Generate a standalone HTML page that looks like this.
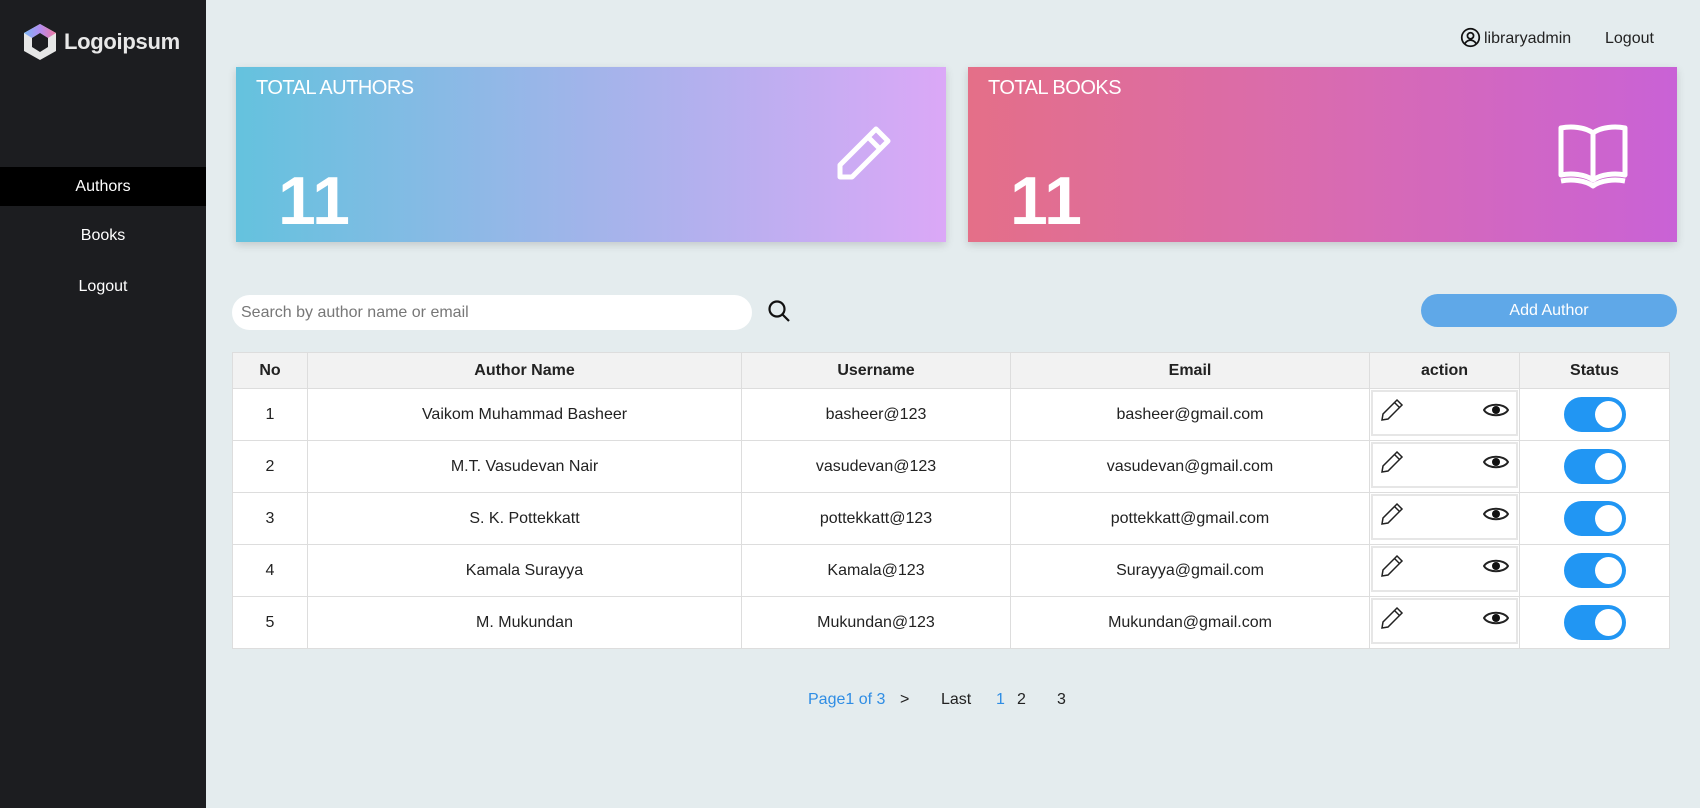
<!DOCTYPE html>
<html><head><style>
*{box-sizing:border-box;margin:0;padding:0}
body{width:1700px;height:808px;background:#e4ecee;font-family:"Liberation Sans",Arial,sans-serif;position:relative;overflow:hidden;color:#222}
.side{position:absolute;left:0;top:0;width:206px;height:808px;background:#1c1d20}
.logo{position:absolute;left:22px;top:22px;display:flex;align-items:center;color:#e8e8e8;font-size:22px;font-weight:bold;letter-spacing:-0.3px}
.nav{position:absolute;left:0;width:206px;text-align:center;color:#fff;font-size:16px;height:39px;line-height:39px}
.card{position:absolute;top:67px;height:175px;box-shadow:0 3px 8px rgba(0,0,0,.15);color:#fff}
.card .t{position:absolute;left:20px;top:10px;font-size:20px;letter-spacing:-0.5px}
.card .n{position:absolute;left:42px;top:95px;font-size:68px;font-weight:bold}
table{position:absolute;left:232px;top:352px;width:1438px;border-collapse:collapse;background:#fff;font-size:16px}
td,th{border:1px solid #ddd;text-align:center;height:52px}
th{background:#f2f2f2;height:36px;font-weight:bold}
.tg{display:inline-block;width:62px;height:35px;border-radius:18px;background:#2196f3;position:relative;vertical-align:middle}
.tg:after{content:"";position:absolute;right:4px;top:4px;width:27px;height:27px;border-radius:50%;background:#fff}
.act{position:relative;padding:0}
.act .bx{position:absolute;left:1px;top:1px;right:1px;bottom:4px;border:2px solid #e6e6e6}
.act svg{position:absolute;top:9px}
</style></head><body>
<div class="side">
 <div class="logo"><svg width="36" height="40" viewBox="0 0 36 40"><defs><linearGradient id="g" x1="0" x2="1"><stop offset="0" stop-color="#7ab8f5"/><stop offset=".5" stop-color="#b38cf0"/><stop offset="1" stop-color="#f07aa0"/></linearGradient></defs><path d="M18 2L34 11V29L18 38L2 29V11Z" fill="#e6e6e6"/><path d="M18 2L34 11L26 16L18 11L10 16L2 11Z" fill="url(#g)"/><path d="M18 11L26 16V25L18 30L10 25V16Z" fill="#1c1d20"/></svg><span style="margin-left:6px">Logoipsum</span></div>
 <div class="nav" style="top:167px;background:#000">Authors</div>
 <div class="nav" style="top:216px">Books</div>
 <div class="nav" style="top:267px">Logout</div>
</div>
<div style="position:absolute;left:1460px;top:26px;font-size:16px;display:flex;align-items:center"><svg width="21" height="21" viewBox="0 0 24 24" fill="none" stroke="#111" stroke-width="2"><circle cx="12" cy="12" r="10"/><circle cx="12" cy="10" r="3.5"/><path d="M5.5 19c2-3 4-4 6.5-4s4.5 1 6.5 4"/></svg><span style="margin-left:3px;margin-top:4px">libraryadmin</span></div>
<div style="position:absolute;left:1605px;top:30px;font-size:16px">Logout</div>
<div class="card" style="left:236px;width:710px;background:linear-gradient(90deg,#64c2de,#a2b4ea 50%,#dba8f7)">
 <div class="t">TOTAL AUTHORS</div><div class="n">11</div>
 <svg style="position:absolute;left:596px;top:58px" width="60" height="60" viewBox="0 0 60 60" fill="none" stroke="#fff" stroke-width="5" stroke-linejoin="round"><path d="M44 4L56 16L20 52H8V40Z"/><path d="M36 12L48 24"/></svg>
</div>
<div class="card" style="left:968px;width:709px;background:linear-gradient(90deg,#e46f88,#d96bb0 50%,#c962d6)">
 <div class="t">TOTAL BOOKS</div><div class="n">11</div>
 <svg style="position:absolute;left:589px;top:52px" width="72" height="72" viewBox="0 0 72 72" fill="none" stroke="#fff" stroke-width="5" stroke-linejoin="round"><path d="M36 14C28 8 14 7 4 9V56C14 54 28 55 36 61C44 55 58 54 68 56V9C58 7 44 8 36 14Z"/><path d="M36 14V61"/><path d="M4 62C14 60 28 61 36 67C44 61 58 60 68 62"/></svg>
</div>
<div style="position:absolute;left:232px;top:295px;width:520px;height:35px;border-radius:18px;background:#fff;color:#777;font-size:16px;line-height:35px;padding-left:9px">Search by author name or email</div>
<svg style="position:absolute;left:767px;top:299px" width="24" height="24" viewBox="0 0 24 24" fill="none" stroke="#111" stroke-width="2.2"><circle cx="10" cy="10" r="7.5"/><path d="M15.5 15.5L22 22"/></svg>
<div style="position:absolute;left:1421px;top:294px;width:256px;height:33px;border-radius:17px;background:#5fa8e8;color:#fff;font-size:16px;line-height:33px;text-align:center">Add Author</div>
<table>
<colgroup><col style="width:75px"><col style="width:434px"><col style="width:269px"><col style="width:359px"><col style="width:150px"><col></colgroup>
<tr><th>No</th><th>Author Name</th><th>Username</th><th>Email</th><th>action</th><th>Status</th></tr>
<tr><td>1</td><td>Vaikom Muhammad Basheer</td><td>basheer@123</td><td>basheer@gmail.com</td><td class="act"><div class="bx"></div><svg style="left:10px" width="24" height="24" viewBox="0 0 24 24" fill="none" stroke="#222" stroke-width="1.5"><path d="M17 2L22 7L8 21L2 22L3 16Z"/><path d="M14.5 4.5L19.5 9.5"/></svg><svg style="right:10px" width="26" height="24" viewBox="0 0 26 24"><path d="M1 12C5 5 21 5 25 12C21 19 5 19 1 12Z" fill="none" stroke="#222" stroke-width="2"/><circle cx="13" cy="12" r="4" fill="#111"/></svg></td><td><span class="tg"></span></td></tr>
<tr><td>2</td><td>M.T. Vasudevan Nair</td><td>vasudevan@123</td><td>vasudevan@gmail.com</td><td class="act"><div class="bx"></div><svg style="left:10px" width="24" height="24" viewBox="0 0 24 24" fill="none" stroke="#222" stroke-width="1.5"><path d="M17 2L22 7L8 21L2 22L3 16Z"/><path d="M14.5 4.5L19.5 9.5"/></svg><svg style="right:10px" width="26" height="24" viewBox="0 0 26 24"><path d="M1 12C5 5 21 5 25 12C21 19 5 19 1 12Z" fill="none" stroke="#222" stroke-width="2"/><circle cx="13" cy="12" r="4" fill="#111"/></svg></td><td><span class="tg"></span></td></tr>
<tr><td>3</td><td>S. K. Pottekkatt</td><td>pottekkatt@123</td><td>pottekkatt@gmail.com</td><td class="act"><div class="bx"></div><svg style="left:10px" width="24" height="24" viewBox="0 0 24 24" fill="none" stroke="#222" stroke-width="1.5"><path d="M17 2L22 7L8 21L2 22L3 16Z"/><path d="M14.5 4.5L19.5 9.5"/></svg><svg style="right:10px" width="26" height="24" viewBox="0 0 26 24"><path d="M1 12C5 5 21 5 25 12C21 19 5 19 1 12Z" fill="none" stroke="#222" stroke-width="2"/><circle cx="13" cy="12" r="4" fill="#111"/></svg></td><td><span class="tg"></span></td></tr>
<tr><td>4</td><td>Kamala Surayya</td><td>Kamala@123</td><td>Surayya@gmail.com</td><td class="act"><div class="bx"></div><svg style="left:10px" width="24" height="24" viewBox="0 0 24 24" fill="none" stroke="#222" stroke-width="1.5"><path d="M17 2L22 7L8 21L2 22L3 16Z"/><path d="M14.5 4.5L19.5 9.5"/></svg><svg style="right:10px" width="26" height="24" viewBox="0 0 26 24"><path d="M1 12C5 5 21 5 25 12C21 19 5 19 1 12Z" fill="none" stroke="#222" stroke-width="2"/><circle cx="13" cy="12" r="4" fill="#111"/></svg></td><td><span class="tg"></span></td></tr>
<tr><td>5</td><td>M. Mukundan</td><td>Mukundan@123</td><td>Mukundan@gmail.com</td><td class="act"><div class="bx"></div><svg style="left:10px" width="24" height="24" viewBox="0 0 24 24" fill="none" stroke="#222" stroke-width="1.5"><path d="M17 2L22 7L8 21L2 22L3 16Z"/><path d="M14.5 4.5L19.5 9.5"/></svg><svg style="right:10px" width="26" height="24" viewBox="0 0 26 24"><path d="M1 12C5 5 21 5 25 12C21 19 5 19 1 12Z" fill="none" stroke="#222" stroke-width="2"/><circle cx="13" cy="12" r="4" fill="#111"/></svg></td><td><span class="tg"></span></td></tr>
</table>
<div style="position:absolute;top:691px;font-size:16px;left:0;width:1700px">
<span style="position:absolute;left:808px;color:#2f8de4">Page1 of 3</span>
<span style="position:absolute;left:900px">&gt;</span>
<span style="position:absolute;left:941px">Last</span>
<span style="position:absolute;left:996px;color:#2f8de4">1</span>
<span style="position:absolute;left:1017px">2</span>
<span style="position:absolute;left:1057px">3</span>
</div>
</body></html>
